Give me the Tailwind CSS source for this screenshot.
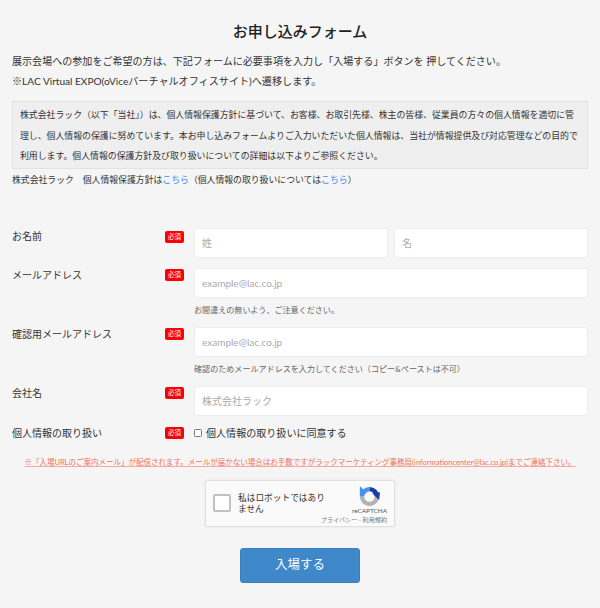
<!DOCTYPE html>
<html lang="ja">
<head>
  <meta charset="UTF-8" />
  <title>お申し込みフォーム</title>
  <script src="https://cdn.jsdelivr.net/npm/@tailwindcss/browser@4"></script>
</head>
<body class="bg-[#f5f5f5] font-['Lato','Noto_Sans_CJK_JP',sans-serif] text-[#333] overflow-hidden">
  <div class="h-[608px] px-3 pt-[21px]">
    <h1 class="text-[15px] leading-5 font-medium text-center text-[#222]">お申し込みフォーム</h1>

    <p class="mt-[10px] text-[10.06px] leading-5">展示会場への参加をご希望の方は、下記フォームに必要事項を入力し「入場する」ボタンを 押してください。</p>
    <p class="text-[10.1px] leading-5">※LAC Virtual EXPO(oViceバーチャルオフィスサイト)へ遷移します。</p>

    <div class="mt-[10px] h-[68px] border border-[#e2e2e2] bg-[#efefef] px-[7px] py-[3px] text-[8.9px] leading-[20.5px]">
      株式会社ラック（以下「当社」）は、個人情報保護方針に基づいて、お客様、お取引先様、株主の皆様、従業員の方々の個人情報を適切に管理し、個人情報の保護に努めています。本お申し込みフォームよりご入力いただいた個人情報は、当社が情報提供及び対応管理などの目的で利用します。個人情報の保護方針及び取り扱いについての詳細は以下よりご参照ください。
    </div>
    <p class="mt-[2px] text-[8.85px] leading-[18px]">株式会社ラック　個人情報保護方針は<a href="#" class="text-[#3b8cf0]">こちら</a>（個人情報の取り扱いについては<a href="#" class="text-[#3b8cf0]">こちら</a>）</p>

    <form class="mt-[39px]">
      <div class="flex">
        <label class="w-[153px] text-[10px] leading-[16px]">お名前</label>
        <span class="mt-[3px] flex h-3 w-[19px] items-center justify-center rounded-[2px] bg-[#fb0007] text-[6.5px] text-white">必須</span>
        <div class="ml-[10px] flex flex-1 gap-[6px]">
          <input type="text" placeholder="姓" class="h-[30px] w-[194px] rounded-[3px] border border-[#ececec] bg-white px-[7px] text-[10px] placeholder:text-[#aaa]" />
          <input type="text" placeholder="名" class="h-[30px] w-[194px] rounded-[3px] border border-[#ececec] bg-white px-[7px] text-[10px] placeholder:text-[#aaa]" />
        </div>
      </div>

      <div class="mt-[10px] flex">
        <label class="w-[153px] text-[10px] leading-[14px]">メールアドレス</label>
        <span class="mt-[1px] flex h-3 w-[19px] items-center justify-center rounded-[2px] bg-[#fb0007] text-[6.5px] text-white">必須</span>
        <div class="ml-[10px] flex-1">
          <input type="email" placeholder="example@lac.co.jp" class="block h-[30px] w-full rounded-[3px] border border-[#ececec] bg-white px-[7px] text-[10px] placeholder:text-[#aaa]" />
          <p class="mt-[6px] text-[8.07px] leading-[13px] text-[#666]">お間違えの無いよう、ご注意ください。</p>
        </div>
      </div>

      <div class="mt-[10px] flex">
        <label class="w-[153px] text-[10px] leading-[14px]">確認用メールアドレス</label>
        <span class="mt-[1px] flex h-3 w-[19px] items-center justify-center rounded-[2px] bg-[#fb0007] text-[6.5px] text-white">必須</span>
        <div class="ml-[10px] flex-1">
          <input type="email" placeholder="example@lac.co.jp" class="block h-[30px] w-full rounded-[3px] border border-[#ececec] bg-white px-[7px] text-[10px] placeholder:text-[#aaa]" />
          <p class="mt-[6px] text-[8.07px] leading-[13px] text-[#666]">確認のためメールアドレスを入力してください（コピー&amp;ペーストは不可）</p>
        </div>
      </div>

      <div class="mt-[10px] flex">
        <label class="w-[153px] text-[10px] leading-[14px]">会社名</label>
        <span class="mt-[1px] flex h-3 w-[19px] items-center justify-center rounded-[2px] bg-[#fb0007] text-[6.5px] text-white">必須</span>
        <div class="ml-[10px] flex-1">
          <input type="text" placeholder="株式会社ラック" class="block h-[30px] w-full rounded-[3px] border border-[#ececec] bg-white px-[7px] text-[10px] placeholder:text-[#aaa]" />
        </div>
      </div>

      <div class="mt-[10px] flex items-center">
        <label class="w-[153px] text-[10px] leading-[14px]">個人情報の取り扱い</label>
        <span class="flex h-3 w-[19px] items-center justify-center rounded-[2px] bg-[#fb0007] text-[6.5px] text-white">必須</span>
        <label class="ml-[10px] flex items-center gap-[4px] text-[10.05px] leading-[14px]">
          <span class="h-2 w-2 rounded-[1.5px] border border-[#777] bg-white"></span>
          個人情報の取り扱いに同意する
        </label>
      </div>

      <p class="mt-[17px] text-center text-[7.5px] leading-3 whitespace-nowrap text-[#f2705f] underline decoration-[#f7a79c]">※「入場URLのご案内メール」が配信されます。メールが届かない場合はお手数ですがラックマーケティング事務局(informationcenter@lac.co.jp)までご連絡下さい。</p>

      <div class="relative mx-auto mt-[11px] flex h-[47px] w-[190px] rounded-[2px] border border-[#e0e0e0] bg-[#fafafa] shadow-[0_0_2px_rgba(0,0,0,0.1)]">
        <span class="ml-[7px] mt-[13px] h-[18px] w-[18px] shrink-0 rounded-[2px] border-2 border-[#c1c1c1] bg-white"></span>
        <span class="ml-[7px] mt-[11px] w-[92px] shrink-0 text-[8.7px] leading-[11px] text-[#333]">私はロボットではありません</span>
        <div class="absolute right-[7px] top-[5px] flex flex-col items-end whitespace-nowrap">
          <svg viewBox="0 0 24 24" class="mr-[7px] h-[21px] w-[21px]" fill="none" stroke-width="5">
            <path d="M20.5 12A8.5 8.5 0 1 1 3.5 12" stroke="#b2b2b2" />
            <path d="M3.5 12A8.5 8.5 0 0 1 12 3.5" stroke="#4a90f0" />
            <path d="M12 3.5A8.5 8.5 0 0 1 20.5 12" stroke="#1c3aa9" />
            <path d="M15 8l9-1-1 9z" fill="#1c3aa9" />
            <path d="M1 0l8 8-8 3z" fill="#4a90f0" />
          </svg>
          <span class="text-[6.4px] leading-[8px] text-[#555]">reCAPTCHA</span>
          <span class="text-[6.1px] leading-[9px] text-[#777]">プライバシー - 利用規約</span>
        </div>
      </div>

      <button type="button" class="mx-auto mt-[21px] block h-[35px] w-[120px] rounded-[3px] border border-[#3a7fbd] bg-[#3f88ca] text-[12.5px] text-white">入場する</button>
    </form>
  </div>
</body>
</html>
